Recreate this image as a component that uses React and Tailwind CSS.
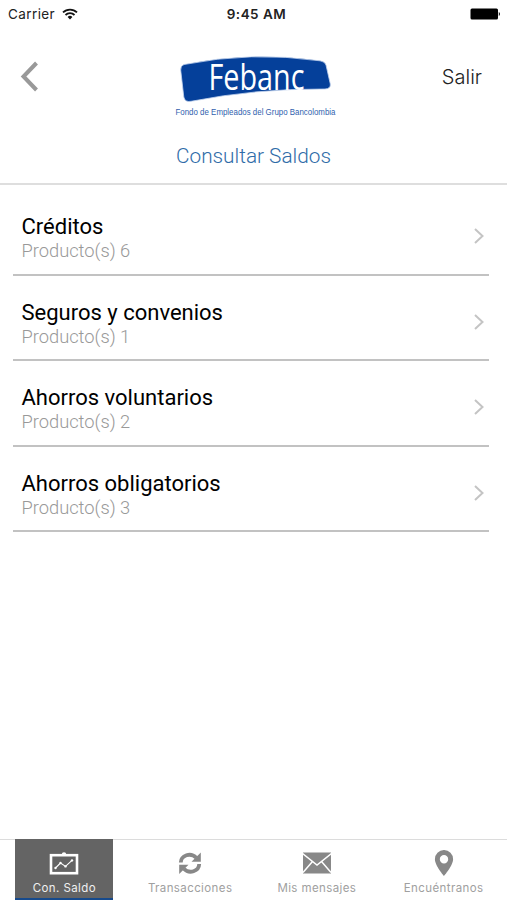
/**
 * @file App.jsx
 * @description Balance overview screen of the Febanc app: status bar, branded
 *              header, list of product groups and the bottom tab bar.
 */

import React from "react";

const PRODUCTS = [
  { name: "Créditos", count: 6 },
  { name: "Seguros y convenios", count: 1 },
  { name: "Ahorros voluntarios", count: 2 },
  { name: "Ahorros obligatorios", count: 3 },
];

function StatusBar() {
  return (
    <div className="grid h-[27px] grid-cols-[1fr_auto_1fr] items-center pl-2 pr-[6px] font-['Inter',sans-serif] text-[13.5px] leading-4 text-[#222]">
      <div className="flex items-center gap-[6px]">
        <span className="w-[48px] tracking-[0.4px]">Carrier</span>
        <svg width="16" height="12" viewBox="0 0 16 12" fill="none" stroke="#111" strokeWidth="1.8">
          <path d="M1 4.4a10 10 0 0 1 14 0" />
          <path d="M3.5 7a6.4 6.4 0 0 1 9 0" />
          <path d="M8 11.5 5.6 9a3.5 3.5 0 0 1 4.8 0z" fill="#111" stroke="none" />
        </svg>
      </div>
      <span className="pl-[4px] text-center font-semibold tracking-[0.5px]">9:45 AM</span>
      <svg className="justify-self-end" width="31" height="12" viewBox="0 0 31 12" fill="#000">
        <rect x="0.5" y="0.5" width="27.5" height="11" rx="1.5" />
        <path d="M28.8 4c1.5.6 1.5 3.4 0 4z" />
      </svg>
    </div>
  );
}

function Logo() {
  return (
    <svg className="overflow-visible" width="166" height="70" viewBox="0 0 166 70">
      <path
        d="M13 12.5Q9.5 13.5 9.7 18L12.8 45Q14 50.5 20 49.3Q85 36.5 154 37Q160 36.5 159.300 32L155 13Q154 9.5 149 8.8Q80 -1 13 12.500Z"
        fill="#05409a"
        stroke="#c3d3ee"
        strokeWidth="0.8"
      />
      <text
        x="37.5"
        y="38"
        textLength="96"
        lengthAdjust="spacingAndGlyphs"
        fill="#fff"
        className="font-['Open_Sans',sans-serif] text-[37px]"
      >
        Febanc
      </text>
      <text
        x="4.5"
        y="62.8"
        textLength="160"
        lengthAdjust="spacingAndGlyphs"
        fill="#315fae"
        className="font-['Liberation_Sans',sans-serif] text-[9.3px]"
      >
        Fondo de Empleados del Grupo Bancolombia
      </text>
    </svg>
  );
}

function Header() {
  return (
    <header className="h-[158px] border-b-2 border-[#dedede]">
      <div className="flex h-[113px] justify-between pt-[25px]">
        <button className="flex w-[171px] pl-[20px] pt-[9px]" aria-label="Atrás">
          <svg width="20" height="32" viewBox="0 0 20 32" fill="none" stroke="#999" strokeWidth="4">
            <path d="M16.5 2 3.5 15.5 16.5 29" />
          </svg>
        </button>
        <Logo />
        <button className="flex w-[170px] justify-end pr-[25px] pt-[11px] font-['Inter',sans-serif] text-[20px] leading-7 font-light text-[#222]">
          Salir
        </button>
      </div>
      <h1 className="pt-px text-center text-[20.8px] leading-[31px] font-light text-[#2f6ca8]">
        Consultar Saldos
      </h1>
    </header>
  );
}

function ProductRow({ name, count }) {
  return (
    <li className="flex h-[85.5px] items-center justify-between border-b-2 border-[#c2c2c2] pl-[8.5px] pr-[4px] pt-[9px]">
      <div className="pt-[4px]">
        <p className="text-[22px] leading-[26px] text-black">{name}</p>
        <p className="text-[18.3px] leading-[22px] font-light text-[#999]">
          Producto(s) {count}
        </p>
      </div>
      <svg width="12" height="18" viewBox="0 0 12 18" fill="none" stroke="#c4c4c4" strokeWidth="2">
        <path d="m2 2 7.5 7L2 16" />
      </svg>
    </li>
  );
}

function ChartIcon() {
  return (
    <svg width="30" height="24" viewBox="0 0 30 24" fill="none" stroke="#fff">
      <rect x="2" y="4.2" width="26" height="18" strokeWidth="2.6" />
      <path d="M12.8 3.6a2.2 2.4 0 0 1 4.4 0z" fill="#fff" strokeWidth="0" />
      <path d="m6.5 17 5-5 5 3.4 6.5-6" strokeWidth="1.1" />
      <g fill="#fff" stroke="none">
        <circle cx="6.5" cy="17" r="1.2" />
        <circle cx="11.5" cy="12" r="1.2" />
        <circle cx="16.5" cy="15.4" r="1.2" />
        <circle cx="23" cy="9.4" r="1.2" />
      </g>
    </svg>
  );
}

function RefreshIcon() {
  return (
    <svg width="24" height="24" viewBox="0 0 24 24" fill="none" stroke="#888" strokeWidth="3.8">
      <path d="M2.8 11.5C3 4.5 12.5 0.8 18.2 6.8" />
      <path d="M22.8 1.5v9.3h-9.3z" fill="#888" stroke="none" />
      <path d="M21.2 13C21 20 11.5 23.7 5.8 17.7" />
      <path d="M1.2 23v-9.3h9.3z" fill="#888" stroke="none" />
    </svg>
  );
}

function MailIcon() {
  return (
    <svg width="30" height="24" viewBox="0 0 30 24">
      <rect x="1" y="1.5" width="28" height="21" fill="#888" />
      <g fill="none" stroke="#fff" strokeWidth="1.5">
        <path d="m0 2 15 12L30 2" />
        <path d="m1 21.5 9.5-11M29 21.5l-9.5-11" />
      </g>
    </svg>
  );
}

function PinIcon() {
  return (
    <svg width="20" height="28" viewBox="0 0 20 28" fill="#888">
      <path
        fillRule="evenodd"
        d="M10 1a9 9 0 0 0-9.1 9.2C.9 16.4 10 27 10 27s9.1-10.6 9.1-16.8A9 9 0 0 0 10 1zm0 5a4.2 4.2 0 1 1 0 8.4 4.2 4.2 0 0 1 0-8.4z"
      />
    </svg>
  );
}

const TABS = [
  { label: "Con. Saldo", Icon: ChartIcon, active: true },
  { label: "Transacciones", Icon: RefreshIcon },
  { label: "Mis mensajes", Icon: MailIcon },
  { label: "Encuéntranos", Icon: PinIcon },
];

function TabBar() {
  return (
    <nav className="mt-auto grid h-[61px] grid-cols-4 font-['Inter',sans-serif] text-[11.5px]">
      {TABS.map(({ label, Icon, active }) => (
        <div
          key={label}
          className={
            active
              ? "flex justify-center border-t border-[#dcdcdc] pl-[2px]"
              : "flex justify-center border-t border-[#dcdcdc]"
          }
        >
          <button
            className={
              active
                ? "-mt-px flex w-[98px] flex-col items-center border-b-2 border-[#164a8c] bg-[#646464] pt-px text-[#f0f0f0]"
                : "flex w-[120px] flex-col items-center text-[#a0a0a0]"
            }
          >
            <span className="mt-[9px] flex h-[28px] items-center">
              <Icon />
            </span>
            <span className="mt-[3px] leading-4 tracking-[0.4px] whitespace-nowrap">
              {label}
            </span>
          </button>
        </div>
      ))}
    </nav>
  );
}

function App() {
  return (
    <main className="flex h-[900px] w-[507px] flex-col overflow-hidden bg-white font-['Roboto',sans-serif]">
      <StatusBar />
      <Header />
      <ul className="mt-[5px] pl-[13px] pr-[18px]">
        {PRODUCTS.map(({ name, count }) => (
          <ProductRow key={name} name={name} count={count} />
        ))}
      </ul>
      <TabBar />
    </main>
  );
}

export default App;
